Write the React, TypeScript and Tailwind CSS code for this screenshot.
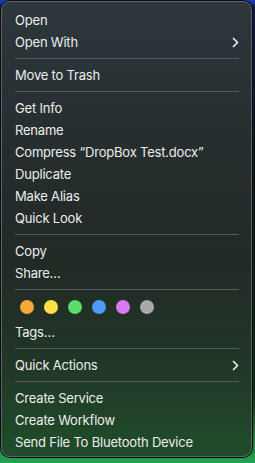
import React from 'react';

type Entry =
  | { kind: 'item'; label: string; sub?: boolean }
  | { kind: 'sep' }
  | { kind: 'tags' };

const entries: Entry[] = [
  { kind: 'item', label: 'Open' },
  { kind: 'item', label: 'Open With', sub: true },
  { kind: 'sep' },
  { kind: 'item', label: 'Move to Trash' },
  { kind: 'sep' },
  { kind: 'item', label: 'Get Info' },
  { kind: 'item', label: 'Rename' },
  { kind: 'item', label: 'Compress \u201CDropBox Test.docx\u201D' },
  { kind: 'item', label: 'Duplicate' },
  { kind: 'item', label: 'Make Alias' },
  { kind: 'item', label: 'Quick Look' },
  { kind: 'sep' },
  { kind: 'item', label: 'Copy' },
  { kind: 'item', label: 'Share\u2026' },
  { kind: 'sep' },
  { kind: 'tags' },
  { kind: 'item', label: 'Tags\u2026' },
  { kind: 'sep' },
  { kind: 'item', label: 'Quick Actions', sub: true },
  { kind: 'sep' },
  { kind: 'item', label: 'Create Service' },
  { kind: 'item', label: 'Create Workflow' },
  { kind: 'item', label: 'Send File To Bluetooth Device' },
];

const tagColors = ['bg-[#f7a73c]', 'bg-[#fbe046]', 'bg-[#5bdc6b]', 'bg-[#4a9cf8]', 'bg-[#d57cf5]', 'bg-[#a9a9ad]'];

const Chevron = () => (
  <svg width="7" height="11" viewBox="0 0 7 11" className="mr-[12px]">
    <polyline points="1.5,1.5 5.5,5.5 1.5,9.5" fill="none" stroke="#ececec" strokeWidth="1.7" strokeLinecap="round" strokeLinejoin="round" />
  </svg>
);

const App: React.FC = () => {
  return (
    <div className="w-[255px] h-[463px] pl-[1px] pt-[1px] bg-[linear-gradient(to_bottom,#1c3fbf_0px,#0d1a3a_8px,#101214_40%,#0f2a17_85%,#22a552_100%)]">
      <div
        className="w-[251px] h-[456px] rounded-[9px] border border-[#5b6266] shadow-[0_0_0_1px_#0b0d0e] overflow-hidden pt-[7px] text-[13px] text-[#ededed] bg-[linear-gradient(to_bottom,#2d373c_0%,#262e2f_30%,#222a26_58%,#213727_80%,#1f4d2b_100%)]"
        style={{ fontFamily: 'Inter, "Noto Sans", sans-serif' }}
      >
        {entries.map((e, i) => {
          if (e.kind === 'sep') {
            return (
              <div key={i} className="py-[5px] pl-[13px] pr-[12px]">
                <div className="h-px bg-[#555b5b]" />
              </div>
            );
          }
          if (e.kind === 'tags') {
            return (
              <div key={i} className="h-[26px] flex items-center gap-[10px] pl-[18px] pb-[2px]">
                {tagColors.map((c) => (
                  <span key={c} className={`w-[14px] h-[14px] rounded-full ${c}`} />
                ))}
              </div>
            );
          }
          return (
            <div key={i} className="h-[22px] flex items-center justify-between pl-[13px] leading-none">
              <span className="tracking-[-0.2px]">{e.label}</span>
              {e.sub && <Chevron />}
            </div>
          );
        })}
      </div>
    </div>
  );
};

export default App;
